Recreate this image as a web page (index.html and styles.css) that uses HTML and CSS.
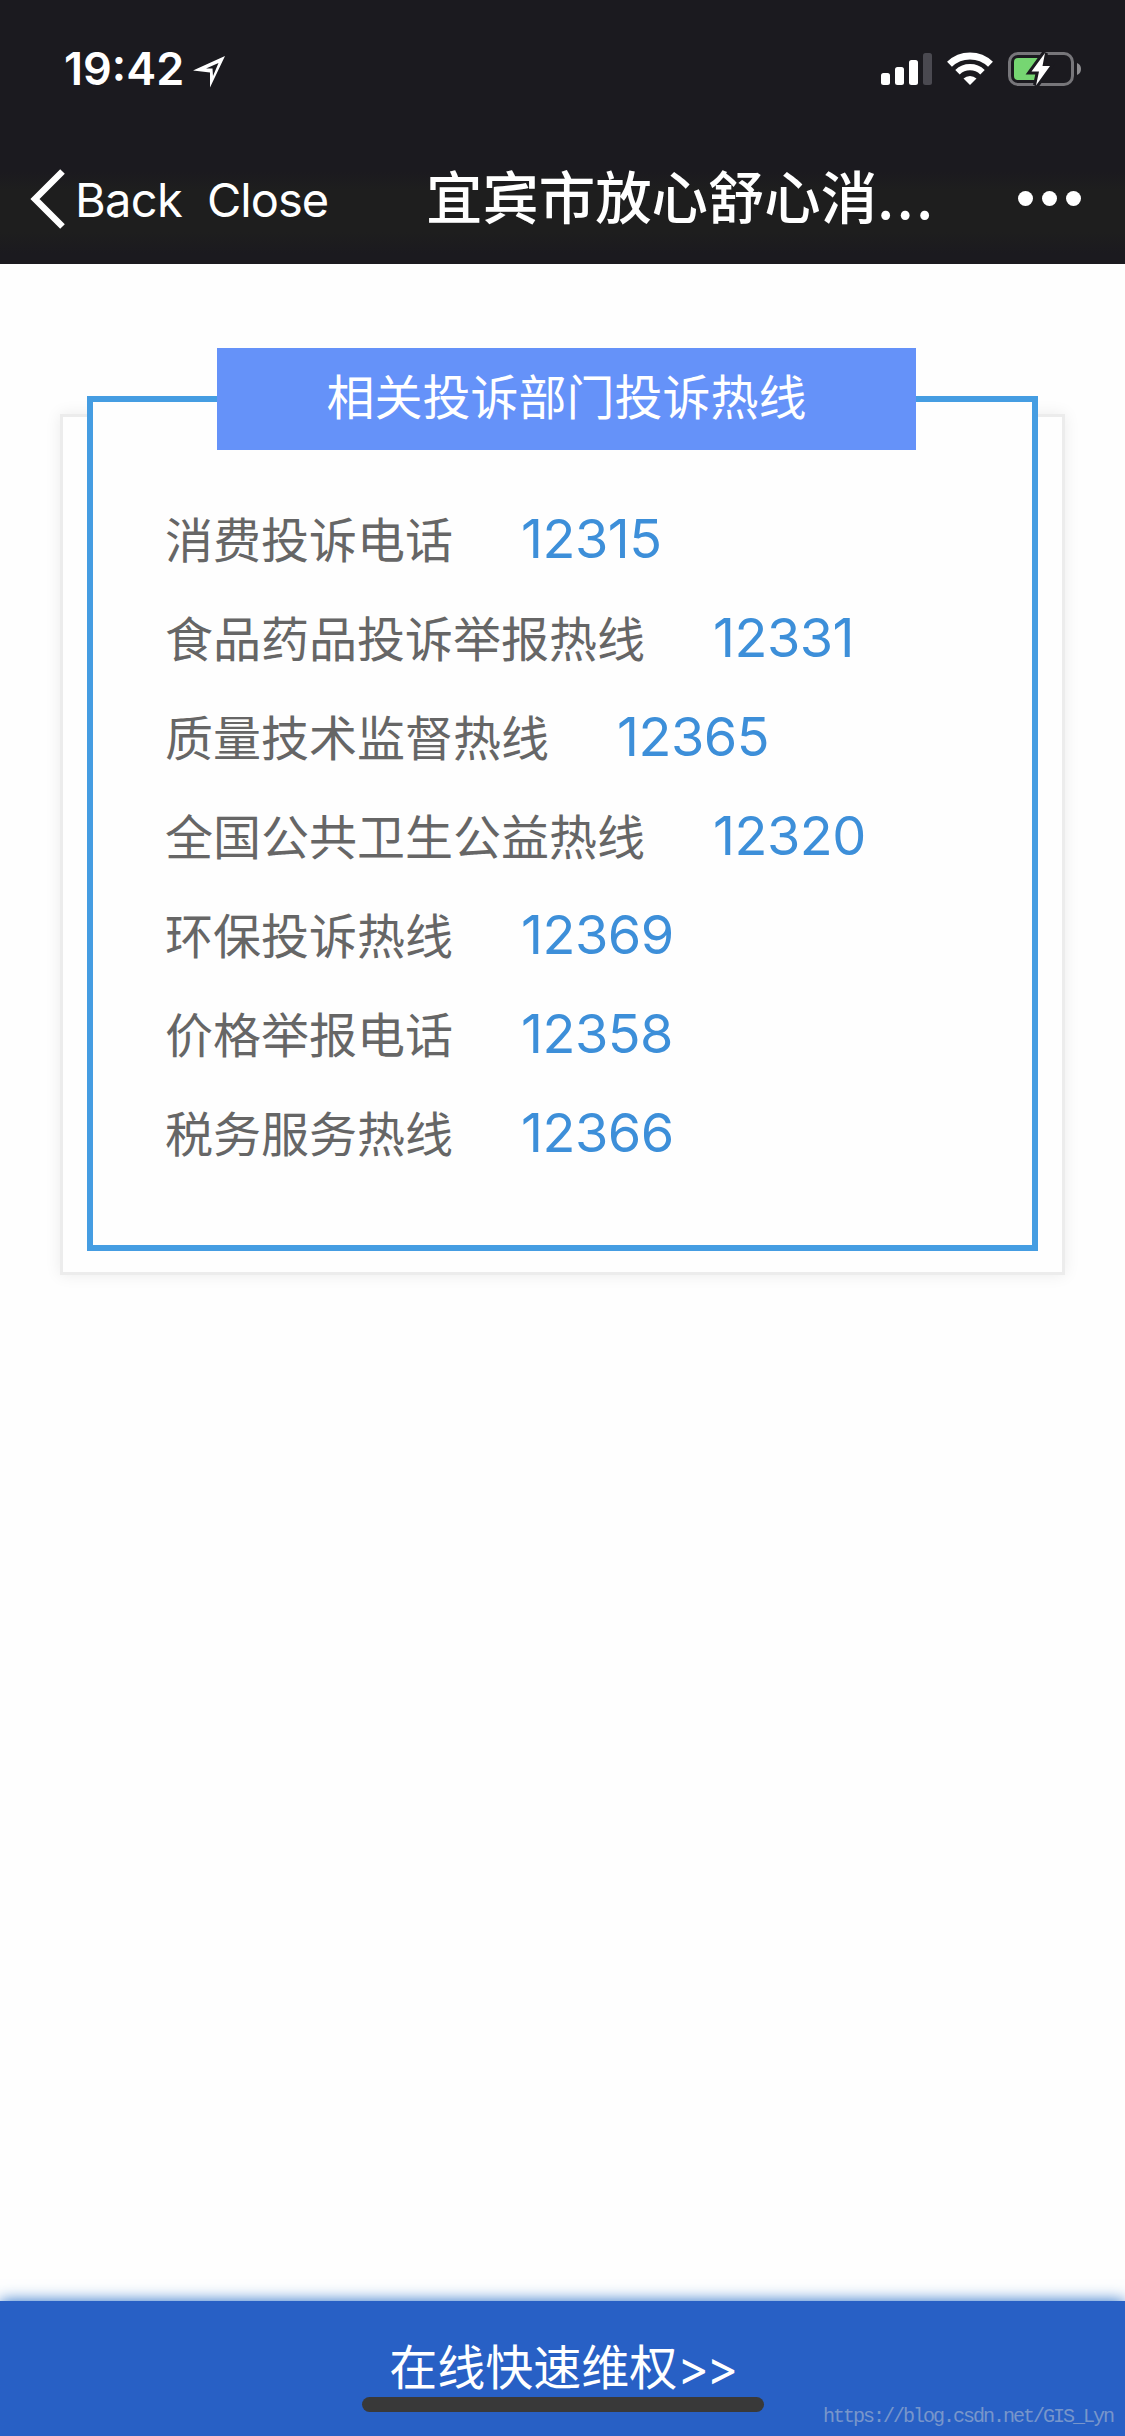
FILE: index.html
```html
<!DOCTYPE html>
<html lang="zh-CN">
<head>
  <meta charset="UTF-8">
  <title>宜宾市放心舒心消费</title>
  <link rel="stylesheet" href="styles.css">
</head>
<body>

  <header class="header">
    <div class="status-bar">
      <span class="time">19:42</span>
      <svg class="location" width="32" height="32" viewBox="0 0 32 32">
        <path d="M32 0 L0 14.500 L17 16.500 V31.500 Z M25.500 7 L20 20 L19.500 12.500 L13 12.500 Z" fill="#fff" fill-rule="evenodd"/>
      </svg>
      <svg class="status-icons" width="204" height="36" viewBox="0 0 204 36">
        <!-- signal -->
        <rect x="1" y="21" width="9" height="12" rx="2.500" fill="#fff"/>
        <rect x="15" y="15" width="9" height="18" rx="2.500" fill="#fff"/>
        <rect x="29" y="8" width="9" height="25" rx="2.500" fill="#fff"/>
        <rect x="43" y="1" width="9" height="32" rx="2.500" fill="#4a4950"/>
        <!-- wifi -->
        <g fill="none" stroke="#fff">
          <path d="M69.500 12.200 A29.500 29.500 0 0 1 110.500 12.200" stroke-width="7"/>
          <path d="M77.500 20.200 A18 18 0 0 1 102.500 20.200" stroke-width="6.400"/>
        </g>
        <path d="M90 33 L83.500 26.500 A9.500 9.500 0 0 1 96.500 26.500 Z" fill="#fff"/>
        <!-- battery -->
        <rect x="129.500" y="1.500" width="63" height="31" rx="8.500" fill="none" stroke="#77767a" stroke-width="3"/>
        <path d="M197 11 Q201 12.500 201 17 Q201 21.500 197 23 Z" fill="#8e8d90"/>
        <rect x="134" y="6" width="28" height="22" rx="4" fill="#76d672"/>
        <path d="M165 1 L151.500 19.500 H159 L156 33.500 L170 14 H162.500 Z" fill="#fff" stroke="#1b1a1f" stroke-width="6" paint-order="stroke"/>
      </svg>
    </div>
    <nav class="nav-bar">
      <svg class="back-icon" width="36" height="60" viewBox="0 0 36 60">
        <path d="M32.500 2.500 L5 30 L32.500 57.500" fill="none" stroke="#fff" stroke-width="6.500"/>
      </svg>
      <span class="back">Back</span>
      <span class="close">Close</span>
      <h1 class="title">宜宾市放心舒心消<span class="dots">...</span></h1>
      <div class="more"><i></i><i></i><i></i></div>
    </nav>
  </header>

  <main class="content">
    <section class="card">
      <div class="card-inner">
        <h2 class="card-title">相关投诉部门投诉热线</h2>
        <ul class="hotlines">
          <li>消费投诉电话<a>12315</a></li>
          <li>食品药品投诉举报热线<a>12331</a></li>
          <li>质量技术监督热线<a>12365</a></li>
          <li>全国公共卫生公益热线<a>12320</a></li>
          <li>环保投诉热线<a>12369</a></li>
          <li>价格举报电话<a>12358</a></li>
          <li>税务服务热线<a>12366</a></li>
        </ul>
      </div>
    </section>
  </main>

  <footer class="footer">
    <span class="footer-text">在线快速维权<span class="arrows">&gt;&gt;</span></span>
    <div class="home-bar"></div>
    <span class="watermark">https://blog.csdn.net/GIS_Lyn</span>
  </footer>

</body>
</html>
```
FILE: styles.css
```css
* {
  box-sizing: border-box;
}
body {
  margin: 0;
  height: 2436px;
  display: flex;
  flex-direction: column;
  overflow: hidden;
  background: #fefefe;
  font-family: Inter, "Noto Sans CJK SC", sans-serif;
}
.header {
  height: 264px;
  background: linear-gradient(#1b1a1f 65%, #1e1e1e 72%, #1e1e1e 88%, #1b1a1f 96%);
  color: #fff;
}
.status-bar {
  height: 138px;
  display: flex;
  align-items: flex-start;
  padding: 52px 41px 0 64px;
}
.time {
  width: 129px;
  font-size: 45px;
  font-weight: 600;
  line-height: 34px;
}
.location {
  margin-top: 4px;
}
.status-icons {
  margin-left: auto;
}
.nav-bar {
  height: 122px;
  display: flex;
  align-items: center;
  padding: 0 44px 0 30px;
}
.back-icon {
  margin-right: 9px;
}
.back,
.close {
  font-size: 47px;
  letter-spacing: -0.7px;
}
.back {
  width: 132px;
}
.close {
  width: 219px;
  letter-spacing: -1px;
}
.title {
  margin: 0;
  padding-bottom: 8px;
  font-family: "Noto Sans CJK SC", sans-serif;
  font-size: 56.4px;
  font-weight: 500;
  line-height: 80px;
  white-space: nowrap;
}
.dots {
  letter-spacing: 2.8px;
}
.more {
  display: flex;
  gap: 9px;
  margin-left: auto;
  padding-bottom: 2px;
}
.more i {
  width: 15px;
  height: 15px;
  border-radius: 50%;
  background: #fff;
}

.content {
  flex: 1;
  padding: 150px 60px 0;
}
.card {
  height: 861px;
  border: 3px solid #ececec;
  box-shadow: 0 0 15px rgba(0, 0, 0, 0.08);
  padding: 0 24px;
}
.card-inner {
  height: 855px;
  margin-top: -21px;
  border: 6px solid #459de2;
  background: #fefefe;
}
.card-title {
  width: 699px;
  height: 102px;
  margin: -54px 0 0 124px;
  background: #6592f9;
  color: #fff;
  font-size: 48px;
  font-weight: 400;
  line-height: 99px;
  text-align: center;
}
.hotlines {
  margin: 0;
  padding: 37px 0 0 72px;
  list-style: none;
}
.hotlines li {
  display: flex;
  align-items: center;
  height: 99px;
  color: #666;
  font-size: 48px;
}
.hotlines a {
  margin-left: 68px;
  padding-top: 4px;
  color: #3d8fd9;
  font-size: 54px;
  letter-spacing: -0.5px;
}

.footer {
  position: relative;
  height: 135px;
  background: #2860c5;
  box-shadow: 0 0 15px #2870c8;
  color: #fff;
  text-align: center;
}
.footer-text {
  font-size: 48px;
  line-height: 134px;
}
.arrows {
  letter-spacing: -2.5px;
}
/* home indicator lies over the button */
.home-bar {
  position: absolute;
  left: 362px;
  bottom: 24px;
  width: 402px;
  height: 15px;
  border-radius: 8px;
  background: #393939;
}
.watermark {
  position: absolute;
  right: 12px;
  bottom: 8px;
  color: rgba(200, 205, 210, 0.5);
  font-family: "Liberation Mono", monospace;
  font-size: 20px;
  letter-spacing: -2px;
}
```
